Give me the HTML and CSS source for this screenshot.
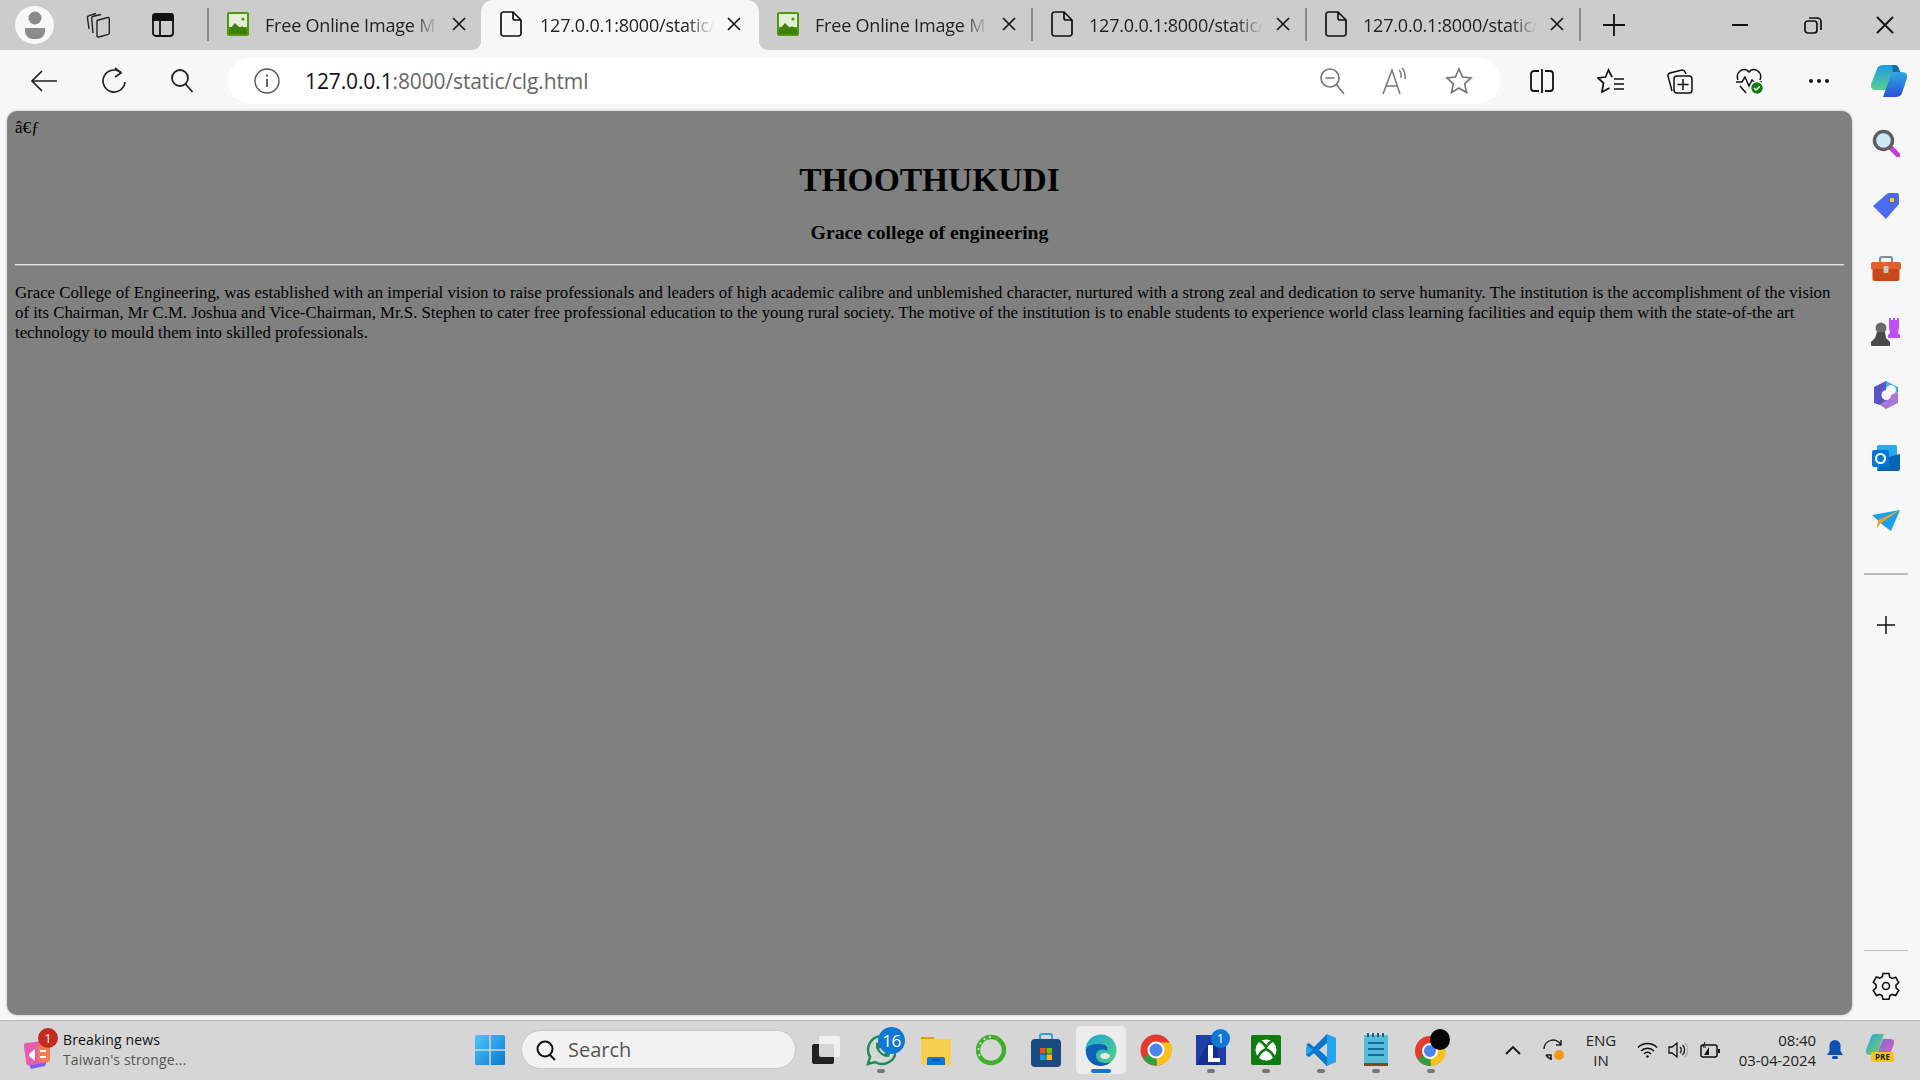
FILE: index.html
```html
<!DOCTYPE html>
<html lang="en">
<head>
<meta charset="utf-8">
<title>clg</title>
<link rel="stylesheet" href="styles.css">
</head>
<body>
<svg class="defs" width="0" height="0">
  <symbol id="img" viewBox="0 0 22 24"><rect width="22" height="24" rx="2" fill="#4f9a0f"/><rect x="2" y="2" width="18" height="20" fill="#e3efd6"/><rect x="2" y="15" width="18" height="7" fill="#4f9a0f"/><path d="M2 18l6-7 5 5 2-2 5 4v4H2z" fill="#3d7f08"/><circle cx="16" cy="7" r="1.600" fill="#4f9a0f"/></symbol>
  <symbol id="doc" viewBox="0 0 22 26"><path d="M1 3.500A2.500 2.500 0 0 1 3.500 1H13l8 8v13.500a2.500 2.500 0 0 1-2.500 2.500h-15A2.500 2.500 0 0 1 1 22.500zM13 1v6a2 2 0 0 0 2 2h6" fill="none" stroke="#111" stroke-width="1.700"/></symbol>
  <symbol id="x" viewBox="0 0 16 16"><path d="M2 2l12 12M14 2L2 14" stroke="#111" stroke-width="1.600" fill="none"/></symbol>
</svg>

<div class="tabstrip">
  <div class="avatar"><svg width="22" height="30" viewBox="0 0 22 30"><circle cx="11" cy="8" r="6.500" fill="#8a8a8a"/><path d="M1 18h20v3a8 8 0 0 1-8 8H9a8 8 0 0 1-8-8z" fill="#8a8a8a"/></svg></div>
  <div class="strip-btn first"><svg width="26" height="26" viewBox="0 0 26 26" fill="none" stroke="#222" stroke-width="1.400"><path d="M4 17L2.500 6a2 2 0 0 1 1.500-2.300L11 1.500"/><path d="M8 21L6.700 6.500a2 2 0 0 1 1.500-2.200L16 2.500"/><path d="M12 8.500l10.500-3a1.300 1.300 0 0 1 1.800 1.300V21a1.500 1.500 0 0 1-1 1.400L13.800 25a1.300 1.300 0 0 1-1.800-1.300z"/></svg></div>
  <div class="strip-btn"><svg width="24" height="26" viewBox="0 0 24 26" fill="none" stroke="#111" stroke-width="1.800"><rect x="2" y="2" width="20" height="22" rx="3"/><path d="M2 4.500a2.500 2.500 0 0 1 2.500-2.500h15a2.500 2.500 0 0 1 2.500 2.500V8H2z" fill="#111"/><path d="M9 8v16"/></svg></div>
  <i class="tab-sep"></i>
  <div class="tab"><svg class="fav" width="22" height="24"><use href="#img"/></svg><span class="tab-title">Free Online Image M</span><svg class="close" width="16" height="16"><use href="#x"/></svg></div>
  <div class="tab active"><svg class="fav" width="22" height="26"><use href="#doc"/></svg><span class="tab-title">127.0.0.1:8000/static/</span><svg class="close" width="16" height="16"><use href="#x"/></svg></div>
  <div class="tab"><svg class="fav" width="22" height="24"><use href="#img"/></svg><span class="tab-title">Free Online Image M</span><svg class="close" width="16" height="16"><use href="#x"/></svg></div>
  <i class="tab-sep"></i>
  <div class="tab"><svg class="fav" width="22" height="26"><use href="#doc"/></svg><span class="tab-title">127.0.0.1:8000/static/</span><svg class="close" width="16" height="16"><use href="#x"/></svg></div>
  <i class="tab-sep"></i>
  <div class="tab"><svg class="fav" width="22" height="26"><use href="#doc"/></svg><span class="tab-title">127.0.0.1:8000/static/</span><svg class="close" width="16" height="16"><use href="#x"/></svg></div>
  <i class="tab-sep"></i>
  <svg class="newtab" width="24" height="24" viewBox="0 0 24 24"><path d="M12 1v22M1 12h22" stroke="#111" stroke-width="1.800"/></svg>
  <div class="winctl">
    <svg width="18" height="4" viewBox="0 0 18 4"><path d="M1 2h16" stroke="#111" stroke-width="2"/></svg>
    <svg width="18" height="18" viewBox="0 0 18 18" fill="none" stroke="#111" stroke-width="1.700"><rect x="1" y="5" width="12" height="12" rx="3"/><path d="M5 2h8a4 4 0 0 1 4 4v8"/></svg>
    <svg width="18" height="18" viewBox="0 0 18 18"><path d="M1 1l16 16M17 1L1 17" stroke="#111" stroke-width="1.800"/></svg>
  </div>
</div>

<div class="toolbar">
  <div class="nav">
    <svg width="28" height="24" viewBox="0 0 28 24" fill="none" stroke="#222" stroke-width="1.700"><path d="M27 12H2M12 2L2 12l10 10"/></svg>
    <svg width="26" height="28" viewBox="0 0 26 28" fill="none" stroke="#222" stroke-width="1.700"><path d="M20 5.500A11 11 0 1 0 24 15"/><path d="M14 1l6 5-6 4"/></svg>
    <svg width="24" height="26" viewBox="0 0 24 26" fill="none" stroke="#222" stroke-width="1.800"><circle cx="10" cy="10" r="8"/><path d="M15.500 16l7 8"/></svg>
  </div>
  <div class="omnibox">
    <svg width="26" height="26" viewBox="0 0 26 26" fill="none" stroke="#555" stroke-width="1.400"><circle cx="13" cy="13" r="12"/><path d="M13 11v8M13 6.500v2" stroke-width="1.800"/></svg>
    <div class="url"><span class="host">127.0.0.1</span>:8000/static/clg.html</div>
    <div class="omni-actions">
      <svg width="26" height="28" viewBox="0 0 26 28" fill="none" stroke="#777" stroke-width="1.700"><circle cx="11" cy="11" r="9"/><path d="M6.500 11h9M17 17l8 10"/></svg>
      <svg width="28" height="28" viewBox="0 0 28 28" fill="none" stroke="#777" stroke-width="1.500"><path d="M2 27L11 3l8 24M5.500 19h11"/><path d="M18 3c2 2 2.500 5 2 8M21 1c3 3 3.500 7 3 11"/></svg>
      <svg width="28" height="28" viewBox="0 0 28 28" fill="none" stroke="#777" stroke-width="1.700"><path d="M14 2l3.600 8 8.400 1-6.300 5.800 1.800 8.700L14 21l-7.500 4.500 1.800-8.700L2 11l8.400-1z"/></svg>
    </div>
  </div>
  <div class="tools">
    <svg width="26" height="26" viewBox="0 0 26 26" fill="none" stroke="#111" stroke-width="1.800"><path d="M10 3H5a3 3 0 0 0-3 3v14a3 3 0 0 0 3 3h5M16 3h5a3 3 0 0 1 3 3v14a3 3 0 0 1-3 3h-5M13 1v24"/></svg>
    <svg width="28" height="26" viewBox="0 0 28 26" fill="none" stroke="#111" stroke-width="1.700"><path d="M15 9L11.500 2 8.500 9 1 10l5.500 5L5 24l7.500-4"/><path d="M17 11h10M17 16h10M17 21h10"/></svg>
    <svg width="28" height="28" viewBox="0 0 28 28" fill="none" stroke="#111" stroke-width="1.500"><path d="M6 24L2 9a3 3 0 0 1 2-3l12-3a3 3 0 0 1 3 2l1 2"/><rect x="8" y="9" width="18" height="17" rx="3"/><path d="M17 12v11M11.500 17.500h11"/></svg>
    <svg width="30" height="28" viewBox="0 0 30 28" fill="none" stroke="#111" stroke-width="1.500"><path d="M3 13C0 5 9-1 14 5c5-6 14 0 11 8"/><path d="M1 15h6l3-5 4 9 3-6 2 2h8M5 19l6 7"/><circle cx="22" cy="21" r="6.500" fill="#107c10" stroke="#fff"/><path d="M19 21l2.200 2 3.500-3.500" stroke="#fff"/></svg>
    <svg width="22" height="6" viewBox="0 0 22 6" fill="#111"><circle cx="3" cy="3" r="2"/><circle cx="11" cy="3" r="2"/><circle cx="19" cy="3" r="2"/></svg>
    <svg width="38" height="34" viewBox="0 0 38 34"><defs><linearGradient id="c1" x1="0" y1="0" x2="0" y2="1"><stop offset="0" stop-color="#1b9de2"/><stop offset="1" stop-color="#5bd08f"/></linearGradient><linearGradient id="c2" x1="0" y1="0" x2="0" y2="1"><stop offset="0" stop-color="#2fa9e6"/><stop offset="1" stop-color="#2a4fd8"/></linearGradient></defs><path d="M14 1h11l-8 25H6q-6 0-5-6L7 5q1-4 7-4z" fill="url(#c1)"/><path d="M24 8h8q6 0 5 6l-5 15q-1 4-7 4H13l9-25z" fill="url(#c2)"/><path d="M22 1h3q4 0 5 7h-7z" fill="#0f6fa8"/></svg>
  </div>
</div>

<div class="main">
  <div class="page">
    <div class="mojibake">â€ƒ</div>
    <h1>THOOTHUKUDI</h1>
    <h3>Grace college of engineering</h3>
    <hr>
    <p>Grace College of Engineering, was established with an imperial vision to raise professionals and leaders of high academic calibre and unblemished character, nurtured with a strong zeal and dedication to serve humanity. The institution is the accomplishment of the vision of its Chairman, Mr C.M. Joshua and Vice-Chairman, Mr.S. Stephen to cater free professional education to the young rural society. The motive of the institution is to enable students to experience world class learning facilities and equip them with the state-of-the art technology to mould them into skilled professionals.</p>
  </div>
  <aside class="sidebar">
    <div class="side-icons">
      <svg width="28" height="28" viewBox="0 0 28 28"><path d="M18 18l8 8" stroke="#c83be0" stroke-width="5" stroke-linecap="round"/><circle cx="11.500" cy="11.500" r="9" fill="#cfe8f6" stroke="#5f5f5f" stroke-width="3.500"/></svg>
      <svg width="28" height="28" viewBox="0 0 28 28"><path d="M16 1h9a2 2 0 0 1 2 2v9L14 27 1 14z" fill="#4b6bf2"/><circle cx="20" cy="8" r="3" fill="#f2c230" stroke="#3e58d0"/></svg>
      <svg width="30" height="26" viewBox="0 0 30 26"><path d="M9 7V3a2 2 0 0 1 2-2h8a2 2 0 0 1 2 2v4" fill="none" stroke="#8a8a8a" stroke-width="2.200"/><rect x="0" y="6" width="30" height="8" rx="2" fill="#e2612a"/><rect x="1.500" y="13" width="27" height="12" rx="2" fill="#c9481b"/><rect x="12.500" y="10" width="5" height="7" rx="1" fill="#c8c8c8"/></svg>
      <svg width="30" height="30" viewBox="0 0 30 30"><path d="M18 1h2v2h2V1h2v2h2V1h2v9l-1 6 2 2v3H17v-3l2-2-1-6z" fill="#c04df5"/><circle cx="10" cy="11" r="5.500" fill="#6b6b6b"/><path d="M6 15h8l1 6 4 4v3a1 1 0 0 1-1 1H1a1 1 0 0 1-1-1v-3l4-4z" fill="#4a4a4a"/></svg>
      <svg width="28" height="28" viewBox="0 0 28 28"><path d="M14 0l12 6v5l-7 3a5 5 0 1 0-5-5z" fill="#35b2e8"/><path d="M26 11v11l-12 6-6-4 7-5a5 5 0 0 0 4-5z" fill="#a877d8"/><path d="M2 6l12-6v9a5 5 0 0 0 1 10l-7 5-6-2z" fill="#5a54c6"/></svg>
      <svg width="28" height="28" viewBox="0 0 28 28"><rect x="5" y="1" width="20" height="26" rx="1.500" fill="#28a8ea"/><path d="M13 14l15-4v15a2 2 0 0 1-2 2H5z" fill="#0a64b5"/><rect x="0" y="6" width="17" height="17" rx="2" fill="#0078d4"/><circle cx="8.500" cy="14.500" r="4.500" fill="none" stroke="#fff" stroke-width="2.200"/></svg>
      <svg width="28" height="22" viewBox="0 0 28 22"><path d="M0 5l28-5-9 21-7-5z" fill="#1da0ea"/><path d="M28 0L6 10l-1 8 4-5z" fill="#f1a31e"/></svg>
    </div>
    <i class="side-sep thick"></i>
    <svg class="side-plus" width="20" height="20" viewBox="0 0 20 20"><path d="M10 1v18M1 10h18" stroke="#111" stroke-width="1.500"/></svg>
    <div class="side-bottom">
      <i class="side-sep"></i>
      <svg width="28" height="28" viewBox="0 0 28 28" fill="none" stroke="#111" stroke-width="1.600"><path d="M11 1.500h6l.8 3.600 2.400 1.300 3.500-1.100 3 5.200-2.700 2.500v2.800l2.700 2.500-3 5.200-3.500-1.100-2.400 1.300-.8 3.600h-6l-.8-3.600-2.400-1.300-3.500 1.100-3-5.200 2.700-2.500V12.700L1.300 10.200l3-5.200 3.500 1.100 2.400-1.300z"/><circle cx="14" cy="14" r="3.500"/></svg>
    </div>
  </aside>
</div>

<footer class="taskbar">
  <div class="news">
    <div class="news-icon">
      <svg width="28" height="34" viewBox="0 0 28 34"><path d="M4 26l20-4-3 8-14 3z" fill="#7d5ff0"/><rect x="1" y="6" width="22" height="22" rx="2" fill="#e75bb0" transform="rotate(-8 12 17)"/><rect x="14" y="8" width="12" height="18" rx="2" fill="#f57b52"/><path d="M5 18l6-5v12l-6-5z" fill="#fff"/><path d="M16 15h6M16 21h6" stroke="#fff" stroke-width="2"/></svg>
      <span class="badge-red">1</span>
    </div>
    <div class="news-text"><span class="news-title">Breaking news</span><span class="news-sub">Taiwan's stronge...</span></div>
  </div>
  <div class="centre">
    <svg class="start" width="30" height="30" viewBox="0 0 30 30"><defs><linearGradient id="w" x1="0" y1="0" x2="1" y2="1"><stop offset="0" stop-color="#4fc6fb"/><stop offset="1" stop-color="#0a78d4"/></linearGradient></defs><rect width="30" height="30" rx="1.500" fill="url(#w)"/><path d="M15 0v30M0 15h30" stroke="#d6d6d6" stroke-width="1.500"/></svg>
    <div class="search">
      <svg width="22" height="22" viewBox="0 0 22 22" fill="none" stroke="#111" stroke-width="2"><circle cx="10" cy="10" r="7.500"/><path d="M15 16l5 5"/></svg>
      <span>Search</span>
    </div>
    <div class="apps">
      <div class="app"><svg width="28" height="28" viewBox="0 0 28 28"><rect x="0" y="8" width="22" height="20" rx="2" fill="#222"/><rect x="7" y="0" width="21" height="21" rx="2" fill="#f4f4f4" opacity=".85"/></svg></div>
      <div class="app dot"><svg width="30" height="32" viewBox="0 0 30 32"><path d="M2 30l2-7A14 14 0 1 1 9 28z" fill="none" stroke="#1e8c55" stroke-width="2.500"/><path d="M10 9l3-1 2 5-2 2q2 4 5 5l2-2 4 2-1 3q-8 1-13-9z" fill="#1e8c55"/></svg><span class="badge-blue wide">16</span></div>
      <div class="app"><svg width="30" height="30" viewBox="0 0 30 30"><path d="M0 2h12l3 3H0z" fill="#d9a00c"/><rect y="4" width="30" height="26" rx="1" fill="#f8cf4e"/><path d="M6 24a2 2 0 0 1 2-2h14a2 2 0 0 1 2 2v6H6z" fill="#0f78d4"/><path d="M11 25h8" stroke="#0a4f8f" stroke-width="1.500"/></svg></div>
      <div class="app"><svg width="30" height="34" viewBox="0 0 30 34" fill="none"><circle cx="15" cy="17" r="13" stroke="#3fb02c" stroke-width="4.500"/><path d="M15 4A13 13 0 0 0 6 26" stroke="#d6d6d6" stroke-width="2" stroke-dasharray="2 4"/></svg></div>
      <div class="app"><svg width="30" height="34" viewBox="0 0 30 34"><path d="M9 8V3a2 2 0 0 1 2-2h8a2 2 0 0 1 2 2v5" fill="none" stroke="#29a3e0" stroke-width="2"/><rect y="6" width="30" height="28" rx="4" fill="#1a4a80"/><rect x="9" y="15" width="5.500" height="5.500" fill="#f25022"/><rect x="15.500" y="15" width="5.500" height="5.500" fill="#7fba00"/><rect x="9" y="21.500" width="5.500" height="5.500" fill="#00a4ef"/><rect x="15.500" y="21.500" width="5.500" height="5.500" fill="#ffb900"/></svg></div>
      <div class="app running"><svg width="32" height="34" viewBox="0 0 32 34"><defs><linearGradient id="e1" x1="0" y1="0" x2="1" y2="1"><stop offset="0" stop-color="#1ba9d8"/><stop offset="1" stop-color="#56d07a"/></linearGradient></defs><circle cx="16" cy="17" r="15.500" fill="url(#e1)"/><path d="M1 18C1 28 9 33 15 33c5 0 9-2 11-4-9 3-16-1-15-8 1-4 6-6 11-3 2-4-2-7-7-7C8 11 1 12 1 18z" fill="#0d5fb8"/><ellipse cx="20" cy="23" rx="5" ry="3" fill="#e8e8e8"/></svg></div>
      <div class="app"><svg width="32" height="34" viewBox="0 0 32 34"><circle cx="16" cy="17" r="15.500" fill="#e33b2e"/><path d="M16 17L3 25a15.500 15.500 0 0 0 14 7.500z" fill="#2f9f44"/><path d="M16 17l1 15.500A15.500 15.500 0 0 0 30 9.500H16z" fill="#f9c11c"/><circle cx="16" cy="17" r="7.500" fill="#4a85ee" stroke="#fff" stroke-width="2"/></svg></div>
      <div class="app dot"><svg width="30" height="30" viewBox="0 0 30 30"><rect width="30" height="30" fill="#1f3fa8"/><path d="M0 30L12 8h10v22z" fill="#15308a"/><path d="M12 10h5v13h7v4H12z" fill="#fff"/></svg><span class="badge-blue">1</span></div>
      <div class="app dot"><svg width="30" height="30" viewBox="0 0 30 30"><rect width="30" height="30" rx="2" fill="#107c10"/><circle cx="15" cy="15" r="10.500" fill="#fff"/><path d="M7 5q5 2 8 7 3-5 8-7M6 25q2-8 9-11 7 3 9 11" stroke="#107c10" stroke-width="2.500" fill="none"/></svg></div>
      <div class="app dot"><svg width="30" height="32" viewBox="0 0 30 32"><path d="M21 0l9 4v24l-9 4-13-13-5 4-3-2v-8l3-2 5 4z" fill="#23a6ef"/><path d="M21 0v32l-13-13-5 4-3-2 7-5-7-5 3-2 5 4z" fill="#0a78c8"/><path d="M21 9l-8 7 8 7z" fill="#d6d6d6"/></svg></div>
      <div class="app dot"><svg width="24" height="36" viewBox="0 0 24 36"><rect y="3" width="24" height="30" rx="1" fill="#55bcd9"/><path d="M4 11h16M4 17h16M4 23h16" stroke="#0f6f96" stroke-width="2"/><rect y="31" width="24" height="3" fill="#7a4a28"/><path d="M4 1v4M9 1v4M14 1v4M19 1v4" stroke="#1e5f7a" stroke-width="2"/></svg></div>
      <div class="app dot"><svg width="32" height="34" viewBox="0 0 32 34"><circle cx="15" cy="18" r="15" fill="#e33b2e"/><path d="M15 18L3 26a15 15 0 0 0 13 7z" fill="#2f9f44"/><path d="M15 18l1 15A15 15 0 0 0 29 11H15z" fill="#f9c11c"/><circle cx="15" cy="18" r="7" fill="#4a85ee" stroke="#fff" stroke-width="2"/></svg><span class="badge-black"></span></div>
    </div>
  </div>
  <div class="tray">
    <svg width="16" height="10" viewBox="0 0 16 10" fill="none" stroke="#111" stroke-width="1.800"><path d="M1 9l7-7 7 7"/></svg>
    <svg class="tray-sync" width="22" height="22" viewBox="0 0 22 22" fill="none" stroke="#222" stroke-width="1.500"><path d="M1 10A9 9 0 0 1 18 6M18 1v5h-5M3 16h5v5M3 16a9 9 0 0 0 6 4"/><circle cx="16" cy="16" r="5" fill="#f39a12" stroke="none"/></svg>
    <div class="lang"><span>ENG</span><span>IN</span></div>
    <svg class="tray-wifi" width="21" height="16" viewBox="0 0 21 16" fill="none" stroke="#111" stroke-width="1.500"><path d="M1 5.500a13.500 13.500 0 0 1 19 0M4 9a9 9 0 0 1 13 0M7 12a4.500 4.500 0 0 1 7 0"/><circle cx="10.500" cy="14.500" r="1.200" fill="#111" stroke="none"/></svg>
    <svg width="20" height="18" viewBox="0 0 20 18" fill="none" stroke="#111" stroke-width="1.300"><path d="M1 6v6h3l5 4V2L4 6z"/><path d="M12 6a4 4 0 0 1 0 6M14.500 4a7 7 0 0 1 0 10"/><path d="M17 2a10 10 0 0 1 0 14" stroke="#aaa"/></svg>
    <svg class="tray-batt" width="20" height="16" viewBox="0 0 20 16"><rect x="1" y="3" width="16" height="12" rx="2" fill="none" stroke="#111" stroke-width="1.500"/><path d="M4 13l5-8v8z" fill="#111"/><rect x="18" y="7" width="2" height="4" fill="#111"/><path d="M5 0l-2 5h3" stroke="#111" fill="none"/></svg>
    <div class="clock"><span>08:40</span><span>03-04-2024</span></div>
    <svg width="16" height="20" viewBox="0 0 16 20"><path d="M8 0a5.500 5.500 0 0 1 5.500 5.500V11l2.500 4H0l2.500-4V5.500A5.500 5.500 0 0 1 8 0z" fill="#0f4fb0"/><rect x="5" y="16" width="6" height="3" rx="1.500" fill="#0f4fb0"/></svg>
    <div class="copilot-pre"><svg width="30" height="26" viewBox="0 0 30 26"><defs><linearGradient id="p1" x1="0" y1="0" x2="1" y2="1"><stop offset="0" stop-color="#1fa3e0"/><stop offset="1" stop-color="#8fd05a"/></linearGradient><linearGradient id="p2" x1="0" y1="0" x2="1" y2="1"><stop offset="0" stop-color="#6a6fe8"/><stop offset="1" stop-color="#f05fa0"/></linearGradient></defs><path d="M10 1h9l-7 21H5q-5 0-4-5L6 4q1-3 4-3z" fill="url(#p1)"/><path d="M20 6h5q5 0 4 5l-4 10q-1 3-5 3H11l7-18z" fill="url(#p2)"/></svg><span class="pre">PRE</span></div>
  </div>
</footer>
</body>
</html>
```
FILE: styles.css
```css
* { box-sizing: border-box; }
html, body { margin: 0; padding: 0; height: 100%; }
body {
  width: 1920px;
  height: 1080px;
  overflow: hidden;
  display: flex;
  flex-direction: column;
  font-family: "Open Sans", "Noto Sans", sans-serif;
  background: #f7f7f7;
  color: #111;
}
.defs { position: absolute; }
svg { display: block; flex: none; }

/* tab strip */
.tabstrip {
  height: 50px;
  background: #cccccc;
  display: flex;
  align-items: center;
  padding-left: 15px;
  flex: none;
}
.avatar {
  width: 39px;
  height: 38px;
  border-radius: 50%;
  background: #f7f7f7;
  display: flex;
  align-items: center;
  justify-content: center;
}
.strip-btn { width: 67px; display: flex; justify-content: center; }
.strip-btn.first { margin-left: 13px; width: 62px; }
.strip-btn + .tab-sep { margin-left: 11px; }
.tab-sep { width: 2px; height: 33px; background: #8c8c8c; flex: none; margin-top: -2px; }
.tab {
  width: 272px;
  height: 50px;
  display: flex;
  align-items: center;
  padding: 0 14px 2px 18px;
  position: relative;
  flex: none;
}
.tab.active {
  width: 278px;
  background: #f7f7f7;
  border-radius: 12px 12px 0 0;
  padding-left: 19px;
  padding-right: 17px;
}
.tab.active .tab-title { margin-left: 18px; }
.tab.active::before, .tab.active::after {
  content: "";
  position: absolute;
  bottom: 0;
  width: 10px;
  height: 10px;
}
.tab.active::before { left: -10px; background: radial-gradient(circle at 0 0, transparent 10px, #f7f7f7 10.5px); }
.tab.active::after { right: -10px; background: radial-gradient(circle at 100% 0, transparent 10px, #f7f7f7 10.5px); }
.tab-title {
  flex: 1;
  min-width: 0;
  margin: 0 12px 0 16px;
  padding-top: 2px;
  white-space: nowrap;
  overflow: hidden;
  font-size: 18px;
  letter-spacing: -0.2px;
  color: #222;
  -webkit-mask-image: linear-gradient(to right, #000 84%, transparent 100%);
  mask-image: linear-gradient(to right, #000 84%, transparent 100%);
}
.newtab { margin-left: 21px; }
.winctl {
  margin-left: auto;
  width: 189px;
  padding-right: 26px;
  display: flex;
  align-items: center;
  justify-content: space-between;
}

/* toolbar */
.toolbar {
  height: 61px;
  flex: none;
  display: flex;
  align-items: center;
  padding-left: 30px;
}
.nav { display: flex; align-items: center; gap: 43px; width: 197px; flex: none; }
.omnibox {
  width: 1274px;
  flex: none;
  height: 47px;
  background: #fff;
  border-radius: 24px;
  display: flex;
  align-items: center;
  padding: 0 28px 0 27px;
  box-shadow: 0 0 2px rgba(0,0,0,.06);
}
.url {
  margin-left: 25px;
  font-size: 21px;
  letter-spacing: -0.12px;
  color: #666;
  white-space: nowrap;
}
.host { color: #111; }
.omni-actions { margin-left: auto; display: flex; align-items: center; gap: 36px; }
.tools {
  flex: none;
  display: grid;
  grid-template-columns: repeat(6, 69.4px);
  justify-items: center;
  align-items: center;
  padding-left: 6px;
}

/* main */
.main { flex: 1; display: flex; min-height: 0; padding-left: 7px; }
.page {
  width: 1845px;
  height: 904px;
  background: #808080;
  border-radius: 10px;
  padding: 7px 8px 8px;
  font-family: "Liberation Serif", "Times New Roman", serif;
  color: #000;
  box-shadow: 0 0 3px rgba(0,0,0,.25);
}
.mojibake { font-size: 17px; line-height: 20px; }
h1 { margin: 23px 0 0; font-size: 33.5px; line-height: 38px; text-align: center; font-weight: 700; }
h3 { margin: 22px 0 0; font-size: 19.7px; line-height: 22px; text-align: center; font-weight: 700; }
hr { margin: 21px 0 0; border: 0; border-top: 1px solid #e4e4e4; border-bottom: 1px solid #a5a5a5; height: 2px; }
p { margin: 17px 0 0; font-size: 16.8px; line-height: 20px; }

.sidebar {
  flex: 1;
  display: flex;
  flex-direction: column;
  align-items: center;
  height: 909px;
}
.side-icons {
  display: grid;
  grid-auto-rows: 63px;
  place-items: center;
}
.side-sep { display: block; width: 44px; height: 1px; background: #bdbdbd; flex: none; }
.side-sep.thick { height: 2px; margin-top: 21px; }
.side-plus { margin-top: 40px; }
.side-bottom {
  margin-top: auto;
  padding-bottom: 20px;
  display: flex;
  flex-direction: column;
  align-items: center;
  gap: 21px;
}

/* taskbar */
.taskbar {
  height: 60px;
  flex: none;
  background: #d6d6d6;
  border-top: 1px solid #b8b8b8;
  display: flex;
  align-items: center;
  padding-bottom: 2px;
  position: relative;
}
.news { width: 475px; display: flex; align-items: center; padding-left: 24px; }
.news-icon { position: relative; width: 39px; height: 40px; display: flex; align-items: flex-end; }
.badge-red {
  position: absolute;
  left: 14px;
  top: -2px;
  width: 20px;
  height: 20px;
  border-radius: 50%;
  background: #c42b1c;
  color: #fff;
  font-size: 13px;
  line-height: 20px;
  text-align: center;
}
.news-text { display: flex; flex-direction: column; font-size: 14px; line-height: 20px; letter-spacing: 0.15px; }
.news-title { color: #111; }
.news-sub { color: #555; }
.centre { display: flex; align-items: center; }
.start { margin-right: 16px; }
.search {
  width: 275px;
  height: 39px;
  border-radius: 20px;
  background: #f2f2f2;
  border: 1px solid #c8c8c8;
  display: flex;
  align-items: center;
  gap: 11px;
  padding-left: 13px;
  font-size: 20px;
  color: #555;
}
.apps { display: flex; margin-left: 2px; }
.app {
  position: relative;
  width: 55px;
  height: 48px;
  display: flex;
  align-items: center;
  justify-content: center;
  border-radius: 5px;
}
.running { background: #ececec; width: 50px; margin: 0 2.5px; }
.running::after {
  content: "";
  position: absolute;
  bottom: 1px;
  left: 15px;
  width: 20px;
  height: 4px;
  border-radius: 2px;
  background: #0f78d4;
}
.dot::after {
  content: "";
  position: absolute;
  bottom: 1px;
  left: 24px;
  width: 8px;
  height: 4px;
  border-radius: 2px;
  background: #777;
}
.badge-blue {
  position: absolute;
  top: 3px;
  left: 28px;
  min-width: 19px;
  height: 19px;
  border-radius: 50%;
  background: #0f78d4;
  color: #fff;
  font-size: 13px;
  line-height: 19px;
  text-align: center;
}
.badge-blue.wide { width: 27px; height: 27px; font-size: 17px; line-height: 27px; letter-spacing: -0.5px; left: 25px; top: 1px; }
.badge-black {
  position: absolute;
  top: 3px;
  left: 27px;
  width: 20px;
  height: 21px;
  border-radius: 50%;
  background: #050505;
}
.tray { position: absolute; left: 1505px; right: 0; top: 0; bottom: 2px; display: flex; align-items: center; }
.tray-sync { margin-left: 22px; }
.lang { width: 50px; margin: 0 0 0 11px; display: flex; flex-direction: column; align-items: center; font-size: 15px; line-height: 20px; color: #222; }
.tray-wifi { margin: 0 10px 0 11px; }
.tray-batt { margin-left: 12px; }
.clock { width: 88px; margin-left: 8px; margin-right: 11px; display: flex; flex-direction: column; align-items: flex-end; font-size: 15px; line-height: 20px; color: #222; letter-spacing: -0.1px; }
.copilot-pre { position: relative; margin-left: 22px; width: 30px; height: 34px; }
.pre {
  position: absolute;
  left: 6px;
  top: 19px;
  width: 23px;
  height: 10px;
  border-radius: 2px;
  background: #f5c518;
  color: #222;
  font-size: 8px;
  font-weight: 700;
  line-height: 10px;
  text-align: center;
}
```
